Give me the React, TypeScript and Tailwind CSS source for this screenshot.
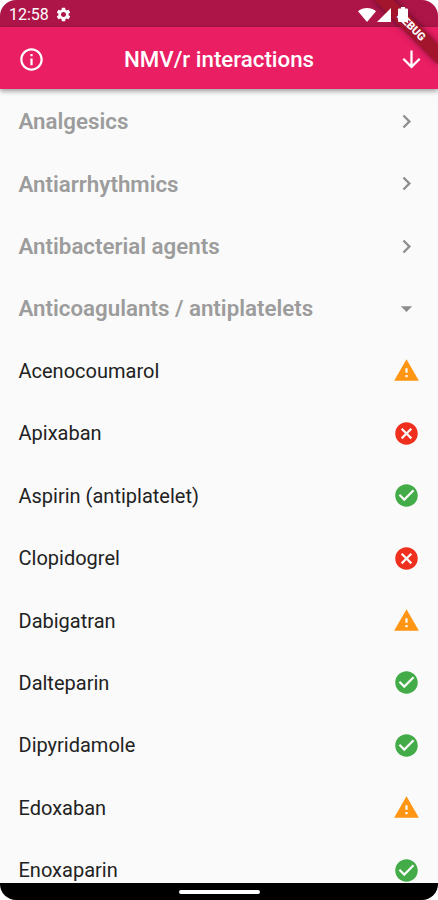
import type { ReactNode } from "react";
import {
  MdArrowDownward,
  MdArrowDropDown,
  MdCancel,
  MdCheckCircle,
  MdChevronRight,
  MdInfoOutline,
  MdSettings,
  MdWarning,
} from "react-icons/md";

type Severity = "safe" | "caution" | "avoid";

interface DrugClass {
  name: string;
  drugs?: { name: string; severity: Severity }[];
}

const drugClasses: DrugClass[] = [
  { name: "Analgesics" },
  { name: "Antiarrhythmics" },
  { name: "Antibacterial agents" },
  {
    name: "Anticoagulants / antiplatelets",
    drugs: [
      { name: "Acenocoumarol", severity: "caution" },
      { name: "Apixaban", severity: "avoid" },
      { name: "Aspirin (antiplatelet)", severity: "safe" },
      { name: "Clopidogrel", severity: "avoid" },
      { name: "Dabigatran", severity: "caution" },
      { name: "Dalteparin", severity: "safe" },
      { name: "Dipyridamole", severity: "safe" },
      { name: "Edoxaban", severity: "caution" },
      { name: "Enoxaparin", severity: "safe" },
    ],
  },
];

const severityIcons: Record<Severity, ReactNode> = {
  safe: <MdCheckCircle className="size-[27px] text-[#43ab48]" />,
  caution: <MdWarning className="size-[27px] text-[#ff9512]" />,
  avoid: <MdCancel className="size-[27px] text-[#f0301f]" />,
};

function StatusBar() {
  return (
    <div className="flex h-[27px] items-center bg-[#ad1549] pt-[2px] pr-[30px] pl-[9px] text-white">
      <span className="text-[16px] leading-none">12:58</span>
      <MdSettings className="ml-[6px] size-[17px]" />
      <div className="relative z-10 ml-auto flex items-center">
        <svg viewBox="0 0 18 14" className="h-[14px] w-[18px] fill-current">
          <path d="M0 3.2C5 -1 13 -1 18 3.2L9 14Z" />
        </svg>
        <svg viewBox="0 0 14 14" className="ml-px h-[14px] w-[14px] fill-current">
          <path d="M14 0V14H0Z" />
        </svg>
        <svg viewBox="0 0 10 15" className="ml-[7px] h-[15px] w-[10px] fill-current">
          <path d="M3 0h4v1.500h2q1 0 1 1V14q0 1-1 1H1q-1 0-1-1V2.500q0-1 1-1h2Z" />
        </svg>
      </div>
    </div>
  );
}

function DebugBanner() {
  return (
    <div className="absolute top-[20px] left-[366px] flex h-[13.500px] w-[90px] rotate-45 items-center justify-center bg-[#a3152d] text-[11px] leading-none font-black text-white shadow-[0_0_6px_rgba(0,0,0,0.5)]">
      DEBUG
    </div>
  );
}

function AppBar() {
  return (
    <header className="relative flex h-[62px] shrink-0 items-center justify-between bg-[#e91e63] pt-[2px] pr-[13px] pl-[18px] text-white shadow-[0_2px_5px_rgba(0,0,0,0.4)]">
      <MdInfoOutline className="size-[27px]" />
      <h1 className="mr-[5px] text-[22.300px] leading-none font-medium">NMV/r interactions</h1>
      <MdArrowDownward className="size-[27px]" />
    </header>
  );
}

function Row({ children }: { children: ReactNode }) {
  return (
    <div className="flex h-[62.400px] shrink-0 items-center justify-between pr-[18px] pl-[18.500px]">
      {children}
    </div>
  );
}

export default function App() {
  return (
    <div className="h-[900px] w-[438px] bg-white font-[Roboto,sans-serif]">
      <div className="relative flex h-full flex-col overflow-hidden rounded-[16px] bg-[#fafafa]">
        <StatusBar />
        <AppBar />
        <DebugBanner />

        <main className="flex min-h-0 flex-1 flex-col overflow-hidden pt-[1.200px]">
          {drugClasses.map((group) => (
            <section key={group.name} className="shrink-0">
              <Row>
                <h2 className="text-[22.300px] leading-none font-semibold text-[#9c9c9c]">
                  {group.name}
                </h2>
                {group.drugs ? (
                  <MdArrowDropDown className="size-[27px] text-[#8c8c8c]" />
                ) : (
                  <MdChevronRight className="size-[27px] text-[#8c8c8c]" />
                )}
              </Row>
              {group.drugs?.map((drug) => (
                <Row key={drug.name}>
                  <span className="text-[20px] leading-none text-[#222222]">{drug.name}</span>
                  {severityIcons[drug.severity]}
                </Row>
              ))}
            </section>
          ))}
        </main>

        <nav className="flex h-[17.500px] shrink-0 items-center justify-center bg-black pt-[2px]">
          <div className="h-[4px] w-[81px] rounded-full bg-white" />
        </nav>
      </div>
    </div>
  );
}
